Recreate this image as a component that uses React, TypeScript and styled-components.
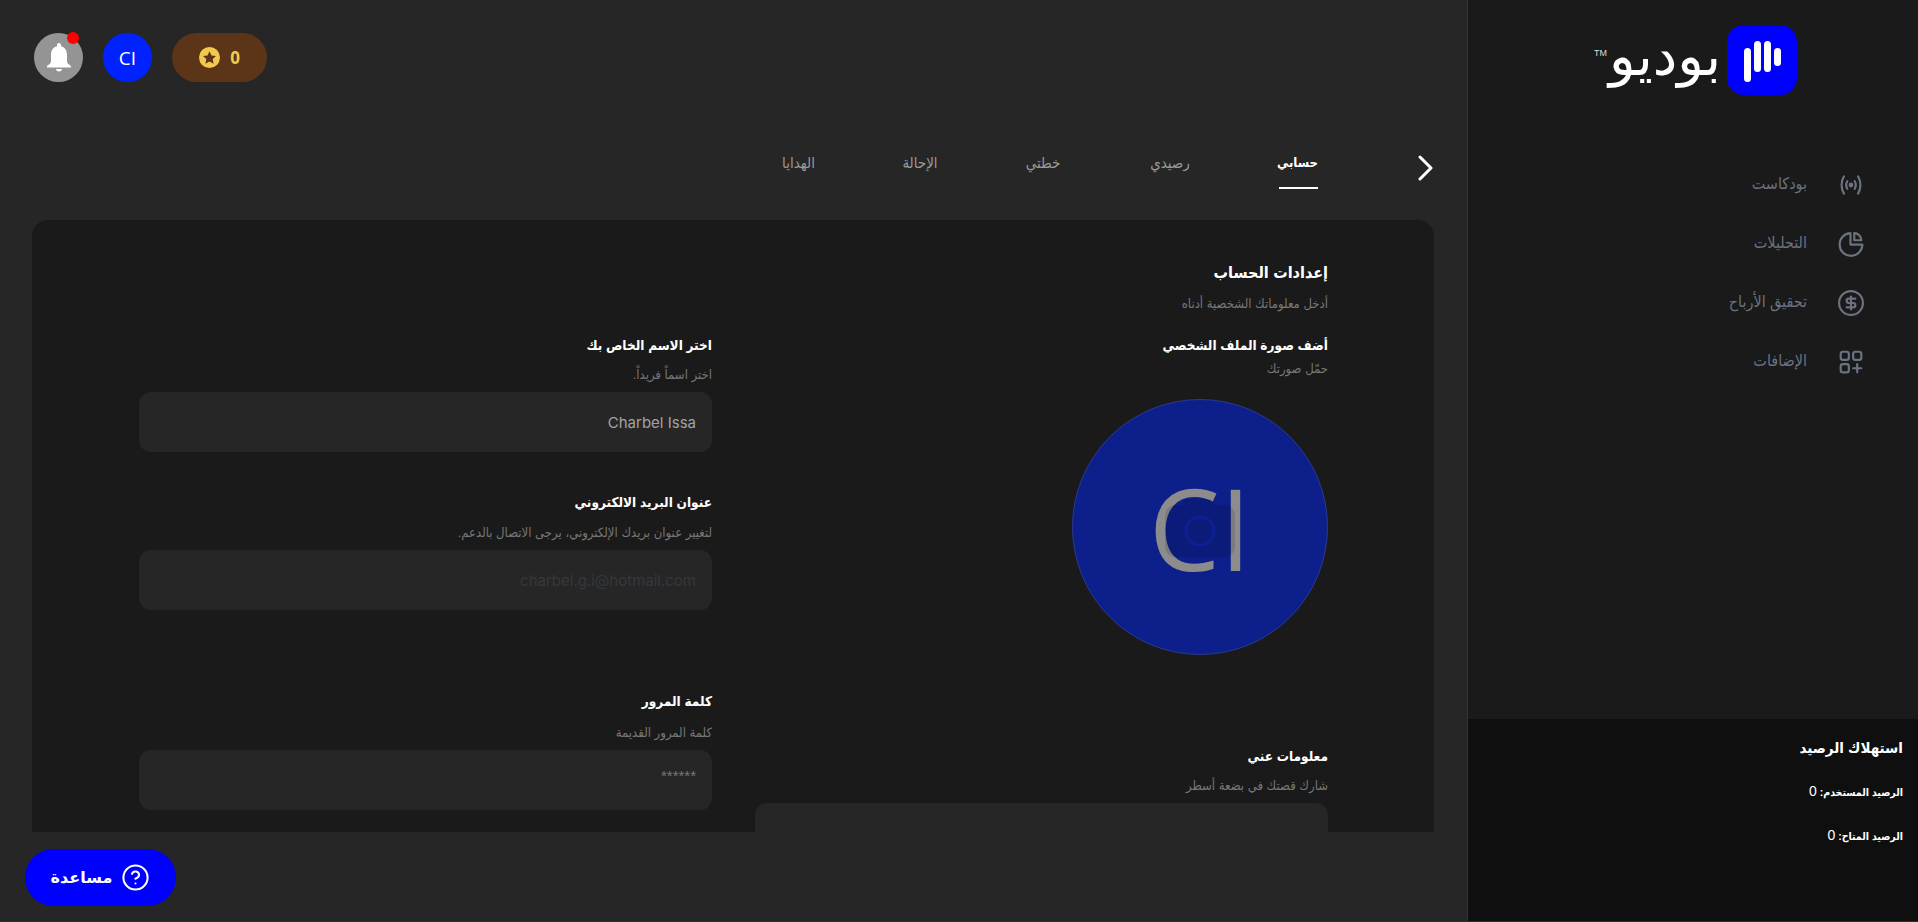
import React from "react";
import styled, { createGlobalStyle } from "styled-components";
import { CircleHelp } from "lucide-react";

const GlobalStyle = createGlobalStyle`
  html, body {
    margin: 0;
    padding: 0;
    background: #262626;
    font-family: "Liberation Sans", "DejaVu Sans Condensed", "DejaVu Sans", sans-serif;
    font-stretch: condensed;
  }
  * {
    box-sizing: border-box;
  }
`;

const Page = styled.div`
  direction: rtl;
  display: flex;
  width: 1918px;
  height: 922px;
  overflow: hidden;
  background: #262626;
  border-bottom: 1px solid #303030;
`;

const Sidebar = styled.aside`
  width: 451px;
  height: 100%;
  flex: none;
  display: flex;
  flex-direction: column;
  background: #1a1a1a;
  border-left: 1px solid #333333;
`;

const LogoRow = styled.div`
  display: flex;
  align-items: center;
  gap: 6px;
  padding: 25px 121px 0 0;
  height: 95px;
`;

const LogoMark = styled.div`
  width: 70px;
  height: 70px;
  flex: none;
  border-radius: 17px;
  background: #0000ff;
  svg {
    display: block;
  }
`;

const WordMark = styled.div`
  position: relative;
  margin-top: -8px;
  font-family: "DejaVu Sans", sans-serif;
  font-stretch: normal;
  font-size: 55px;
  line-height: 70px;
  color: #ffffff;
  sup {
    position: absolute;
    left: -15px;
    top: 27px;
    direction: ltr;
    font-family: "Liberation Sans", sans-serif;
    font-size: 9px;
    line-height: 10px;
    color: #dddddd;
  }
`;

const Nav = styled.nav`
  display: flex;
  flex-direction: column;
  padding: 60px 54px 0 0;
`;

const NavItem = styled.a`
  display: flex;
  align-items: center;
  height: 59px;
  gap: 31px;
  color: #6b7280;
  font-size: 16px;
  svg {
    width: 26px;
    height: 26px;
    flex: none;
  }
  span {
    margin-bottom: 3px;
  }
`;

const Balance = styled.div`
  margin-top: auto;
  height: 202px;
  padding: 20px 15px 0 0;
  background: #0f0f0f;
  color: #ffffff;
`;

const BalanceTitle = styled.div`
  font-size: 15px;
  font-weight: 700;
  line-height: 18px;
  margin-bottom: 25px;
`;

const BalanceRow = styled.div`
  font-size: 10.5px;
  font-weight: 700;
  line-height: 18px;
  margin-bottom: 25px;
  b {
    font-size: 14px;
    font-weight: 400;
  }
`;

const Main = styled.main`
  flex: 1;
  min-width: 0;
  display: flex;
  flex-direction: column;
`;

const TopBar = styled.header`
  direction: ltr;
  display: flex;
  align-items: center;
  gap: 20px;
  padding: 33px 0 0 34px;
`;

const BellButton = styled.div`
  position: relative;
  width: 49px;
  height: 49px;
  border-radius: 50%;
  background: #949494;
  display: flex;
  align-items: center;
  justify-content: center;
`;

const RedDot = styled.span`
  position: absolute;
  top: -1px;
  right: 4px;
  width: 12px;
  height: 12px;
  border-radius: 50%;
  background: #ff0000;
`;

const UserBadge = styled.div`
  width: 49px;
  height: 49px;
  border-radius: 50%;
  background: #0022ff;
  color: #ffffff;
  font-family: "Open Sans", sans-serif;
  font-stretch: normal;
  font-size: 19px;
  display: flex;
  align-items: center;
  justify-content: center;
`;

const PointsPill = styled.div`
  width: 95px;
  height: 49px;
  border-radius: 25px;
  background: #5c3418;
  color: #f2c94c;
  font-family: "Open Sans", sans-serif;
  font-stretch: normal;
  font-size: 17px;
  font-weight: 700;
  display: flex;
  align-items: center;
  justify-content: center;
  gap: 10px;
`;

const Tabs = styled.div`
  display: flex;
  align-items: flex-start;
  height: 138px;
  padding: 70px 34px 0 0;
`;

const TabBack = styled.div`
  width: 115px;
  margin-top: 3px;
  flex: none;
  svg {
    display: block;
  }
`;

const TabList = styled.div`
  display: flex;
  gap: 86px;
`;

const Tab = styled.a<{ $active?: boolean; $width: number }>`
  display: block;
  width: ${(p) => p.$width}px;
  height: 37px;
  padding: 2px 0 0;
  text-align: center;
  white-space: nowrap;
  font-size: ${(p) => (p.$active ? 13 : 15)}px;
  line-height: 18px;
  font-weight: ${(p) => (p.$active ? 700 : 400)};
  color: ${(p) => (p.$active ? "#ffffff" : "#9a9a9a")};
  border-bottom: 2px solid ${(p) => (p.$active ? "#ffffff" : "transparent")};
`;

const Card = styled.section`
  margin: 0 33px 0 32px;
  height: 612px;
  overflow: hidden;
  padding: 42px 106px 0 107px;
  background: #1a1a1a;
  border-radius: 16px 16px 0 0;
`;

const CardTitle = styled.h1`
  margin: 0;
  font-size: 16px;
  line-height: 22px;
  font-weight: 700;
  color: #ffffff;
`;

const CardHint = styled.p`
  margin: 11px 0 0;
  font-size: 13px;
  line-height: 18px;
  color: #777777;
`;

const Columns = styled.div`
  display: grid;
  grid-template-columns: 573px 573px;
  justify-content: space-between;
  margin-top: 23px;
`;

const Column = styled.div`
  display: flex;
  flex-direction: column;
`;

const Block = styled.div<{ $top?: number }>`
  margin-top: ${(p) => p.$top ?? 0}px;
`;

const Label = styled.div`
  font-size: 13.5px;
  line-height: 20px;
  font-weight: 700;
  color: #ffffff;
`;

const Hint = styled.div<{ $gap?: number }>`
  margin: ${(p) => p.$gap ?? 10}px 0 8px;
  font-size: 13px;
  line-height: 18px;
  color: #777777;
`;

const Field = styled.div<{ $dim?: boolean }>`
  height: 60px;
  padding: 0 16px;
  border-radius: 12px;
  background: #262626;
  display: flex;
  align-items: center;
  font-family: "Inter", sans-serif;
  font-stretch: normal;
  font-size: 15px;
  color: ${(p) => (p.$dim ? "#35383d" : "#a3a3a3")};
`;

const Stars = styled.span`
  color: #777777;
  font-family: "Liberation Sans", sans-serif;
  margin-bottom: 10px;
`;

const TextArea = styled.div`
  height: 120px;
  border-radius: 12px;
  background: #262626;
`;

const AvatarWrap = styled.div`
  display: flex;
  justify-content: flex-start;
  margin-top: 13px;
  height: 256px;
`;

const Avatar = styled.div`
  position: relative;
  width: 256px;
  height: 256px;
  border-radius: 50%;
  background: #0c1f8a;
  border: 1px solid #2a3a90;
  color: #8c8c8c;
  font-family: "Open Sans", sans-serif;
  font-stretch: normal;
  font-size: 113px;
  direction: ltr;
  display: flex;
  align-items: center;
  justify-content: center;
`;

const CameraOverlay = styled.svg`
  position: absolute;
  left: 92px;
  top: 99px;
`;

const Footer = styled.footer`
  direction: ltr;
  padding: 17px 0 0 25px;
`;

const HelpButton = styled.button`
  direction: rtl;
  width: 151px;
  height: 57px;
  border: 0;
  border-radius: 29px;
  background: #0000ff;
  color: #ffffff;
  font-family: "DejaVu Sans", sans-serif;
  font-stretch: normal;
  font-size: 16px;
  font-weight: 700;
  display: flex;
  align-items: center;
  justify-content: center;
  gap: 9px;
`;

const PodcastIcon = () => (
  <svg viewBox="0 0 24 24" fill="none" stroke="#6b7280" strokeWidth="2" strokeLinecap="round">
    <path d="M5.500 4C2.600 8.500 2.600 15.500 5.500 20" />
    <path d="M18.500 4c2.900 4.500 2.900 11.500 0 16" />
    <path d="M8.600 8.500c-1.200 2-1.200 5 0 7" />
    <path d="M15.400 8.500c1.200 2 1.200 5 0 7" />
    <circle cx="12" cy="12" r="1.200" fill="#6b7280" />
  </svg>
);

const PieIcon = () => (
  <svg viewBox="0 0 24 24" fill="none" stroke="#6b7280" strokeWidth="2" strokeLinejoin="round">
    <path d="M11.500 2A10.500 10.500 0 1 0 22.500 12.500H11.500Z" />
    <path d="M15 2V8.500H21.500A6.500 6.500 0 0 0 15 2Z" />
  </svg>
);

const DollarIcon = () => (
  <svg viewBox="0 0 24 24" fill="none" stroke="#6b7280" strokeWidth="2" strokeLinecap="round">
    <circle cx="12" cy="12" r="11" />
    <path d="M16 8h-6a2 2 0 1 0 0 4h4a2 2 0 1 1 0 4H8" />
    <path d="M12 18V6" />
  </svg>
);

const AppsIcon = () => (
  <svg viewBox="0 0 24 24" fill="none" stroke="#6b7280" strokeWidth="2" strokeLinecap="round">
    <rect x="2.500" y="2.500" width="7.500" height="7.500" rx="2" />
    <rect x="14" y="2.500" width="7.500" height="7.500" rx="2" />
    <rect x="2.500" y="14" width="7.500" height="7.500" rx="2" />
    <path d="M17.750 14v7.500M14 17.750h7.500" />
  </svg>
);

const BellIcon = () => (
  <svg width="24" height="29" viewBox="0 0 24 29" fill="#ffffff">
    <path d="M12 0c-1.200 0-2 .8-2 2v1.200C5.500 4.500 4 8 4 12v6c0 2-1.500 3.500-4 5v1.500h24V23c-2.500-1.500-4-3-4-5v-6c0-4-1.500-7.500-6-8.800V2c0-1.200-.8-2-2-2z" />
    <path d="M9 26h6c0 1.500-1.300 2.500-3 2.500S9 27.500 9 26z" />
  </svg>
);

const CoinIcon = () => (
  <svg width="21" height="21" viewBox="0 0 21 21">
    <circle cx="10.500" cy="10.500" r="10.500" fill="#f2c94c" />
    <path
      d="M10.500 4.200l2 4.200 4.500.6-3.300 3.100.9 4.600-4.100-2.300-4.100 2.300.9-4.600L4 9l4.500-.6z"
      fill="#5c3418"
    />
  </svg>
);

const tabs = [
  { label: "حسابي", width: 39, active: true },
  { label: "رصيدي", width: 46 },
  { label: "خطتي", width: 36 },
  { label: "الإحالة", width: 38 },
  { label: "الهدايا", width: 33 },
];

const App: React.FC = () => {
  return (
    <Page>
      <GlobalStyle />
      <Sidebar>
        <LogoRow>
          <LogoMark>
            <svg width="70" height="70" viewBox="0 0 70 70" fill="#ffffff">
              <rect x="17" y="23" width="7" height="34" rx="3.500" />
              <rect x="27" y="16" width="7" height="31" rx="3.500" />
              <rect x="37" y="16" width="7" height="31" rx="3.500" />
              <rect x="47" y="23" width="7" height="18" rx="3.500" />
            </svg>
          </LogoMark>
          <WordMark>
            بوديو
            <sup>TM</sup>
          </WordMark>
        </LogoRow>
        <Nav>
          <NavItem>
            <PodcastIcon />
            <span>بودكاست</span>
          </NavItem>
          <NavItem>
            <PieIcon />
            <span>التحليلات</span>
          </NavItem>
          <NavItem>
            <DollarIcon />
            <span>تحقيق الأرباح</span>
          </NavItem>
          <NavItem>
            <AppsIcon />
            <span>الإضافات</span>
          </NavItem>
        </Nav>
        <Balance>
          <BalanceTitle>استهلاك الرصيد</BalanceTitle>
          <BalanceRow>
            الرصيد المستخدم: <b>0</b>
          </BalanceRow>
          <BalanceRow>
            الرصيد المتاح: <b>0</b>
          </BalanceRow>
        </Balance>
      </Sidebar>
      <Main>
        <TopBar>
          <BellButton>
            <BellIcon />
            <RedDot />
          </BellButton>
          <UserBadge>CI</UserBadge>
          <PointsPill>
            <CoinIcon />0
          </PointsPill>
        </TopBar>
        <Tabs>
          <TabBack>
            <svg width="15" height="26" viewBox="0 0 15 26" fill="none" stroke="#ffffff" strokeWidth="3" strokeLinecap="round" strokeLinejoin="round">
              <path d="M2 2l11 11L2 24" />
            </svg>
          </TabBack>
          <TabList>
            {tabs.map((tab) => (
              <Tab key={tab.label} $active={tab.active} $width={tab.width}>
                {tab.label}
              </Tab>
            ))}
          </TabList>
        </Tabs>
        <Card>
          <CardTitle>إعدادات الحساب</CardTitle>
          <CardHint>أدخل معلوماتك الشخصية أدناه</CardHint>
          <Columns>
            <Column>
              <Label>أضف صورة الملف الشخصي</Label>
              <Hint $gap={4}>حمّل صورتك</Hint>
              <AvatarWrap>
                <Avatar>
                  CI
                  <CameraOverlay width="70" height="58" viewBox="0 0 70 58">
                    <path
                      d="M10 6H17L20 0H46L49 6H60a10 10 0 0 1 10 10V48a10 10 0 0 1-10 10H10A10 10 0 0 1 0 48V16A10 10 0 0 1 10 6Z"
                      fill="#000000"
                      opacity="0.12"
                    />
                    <circle cx="35" cy="32" r="14" fill="none" stroke="#0c2096" strokeWidth="3" />
                  </CameraOverlay>
                </Avatar>
              </AvatarWrap>
              <Block $top={92}>
                <Label>معلومات عني</Label>
                <Hint>شارك قصتك في بضعة أسطر</Hint>
                <TextArea />
              </Block>
            </Column>
            <Column>
              <Block>
                <Label>اختر الاسم الخاص بك</Label>
                <Hint>اختر اسماً فريداً.</Hint>
                <Field>Charbel Issa</Field>
              </Block>
              <Block $top={41}>
                <Label>عنوان البريد الالكتروني</Label>
                <Hint $gap={11}>لتغيير عنوان بريدك الإلكتروني، يرجى الاتصال بالدعم.</Hint>
                <Field $dim>charbel.g.i@hotmail.com</Field>
              </Block>
              <Block $top={82}>
                <Label>كلمة المرور</Label>
                <Hint $gap={12}>كلمة المرور القديمة</Hint>
                <Field>
                  <Stars>******</Stars>
                </Field>
              </Block>
            </Column>
          </Columns>
        </Card>
        <Footer>
          <HelpButton>
            <CircleHelp size={29} strokeWidth={1.7} />
            مساعدة
          </HelpButton>
        </Footer>
      </Main>
    </Page>
  );
};

export default App;
